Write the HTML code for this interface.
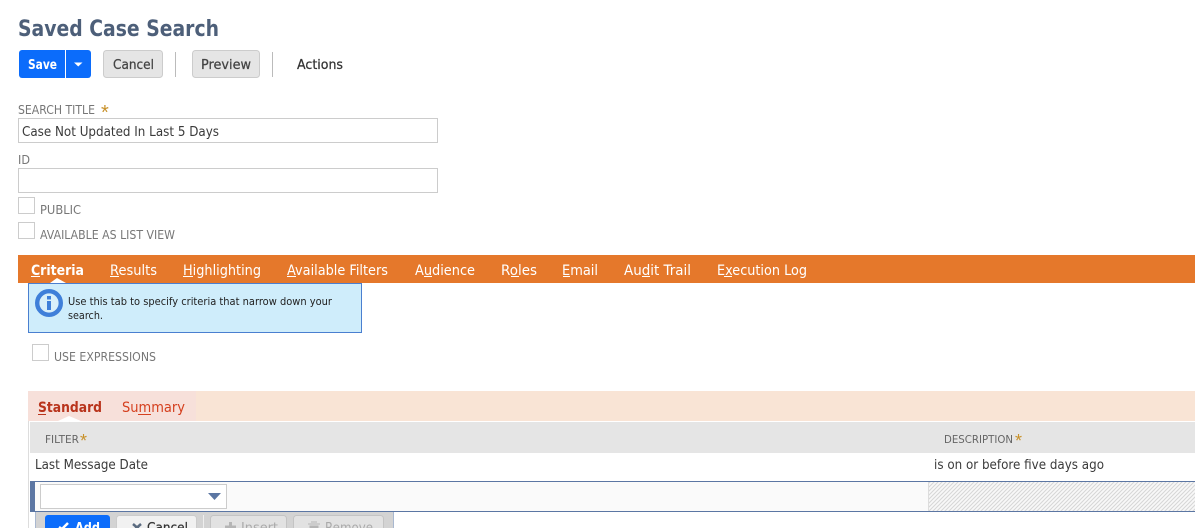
<!DOCTYPE html>
<html><head><meta charset="utf-8"><style>
html,body{margin:0;padding:0;background:#fff;width:1195px;height:528px;overflow:hidden}
svg{display:block}
text{font-family:"DejaVu Sans",sans-serif;font-size:13px;fill:#3a3a3a}
.l{font-size:12px;fill:#777}
.t{font-size:14.5px;fill:#fff}
.s{font-family:"Liberation Sans",sans-serif;fill:#c8912a}
</style></head><body>
<svg width="1195" height="528" viewBox="0 0 1195 528" xmlns="http://www.w3.org/2000/svg">
<defs><pattern id="h" width="4" height="4" patternUnits="userSpaceOnUse"><rect width="4" height="4" fill="#f8f8f8"/><path d="M-1 1L1 -1M0 4L4 0M3 5L5 3" stroke="#d6d6d6" stroke-width="1"/></pattern></defs>

<text x="18" y="36" textLength="201" lengthAdjust="spacingAndGlyphs" style="font-size:22px;font-weight:700;fill:#4d5f79">Saved Case Search</text>

<rect x="19" y="50" width="72" height="28" rx="3" fill="#0b6cfb"/>
<rect x="65" y="50" width="1" height="28" fill="#fff"/>
<path d="M74 62.500h8.500l-4.250 4z" fill="#fff"/>
<text x="28" y="69" textLength="29" lengthAdjust="spacingAndGlyphs" style="font-weight:700;fill:#fff">Save</text>
<rect x="103.500" y="50.500" width="59" height="27" rx="3" fill="#e5e5e5" stroke="#ccc"/>
<text x="113" y="69" textLength="41" lengthAdjust="spacingAndGlyphs" style="fill:#444;stroke:#444;stroke-width:.25">Cancel</text>
<rect x="175" y="52" width="1" height="25" fill="#bbb"/>
<rect x="192.500" y="50.500" width="67" height="27" rx="3" fill="#e5e5e5" stroke="#ccc"/>
<text x="201" y="69" textLength="50" lengthAdjust="spacingAndGlyphs" style="fill:#444;stroke:#444;stroke-width:.25">Preview</text>
<rect x="272" y="52" width="1" height="25" fill="#bbb"/>
<text x="297" y="69" textLength="46" lengthAdjust="spacingAndGlyphs" style="fill:#333;stroke:#333;stroke-width:.25">Actions</text>

<text class="l" x="18" y="114" textLength="77" lengthAdjust="spacingAndGlyphs">SEARCH TITLE</text>
<text class="s" x="101" y="119" style="font-size:20px">*</text>
<rect x="18.500" y="118.500" width="419" height="24" fill="#fff" stroke="#ccc"/>
<text x="22" y="136" textLength="197" lengthAdjust="spacingAndGlyphs">Case Not Updated In Last 5 Days</text>
<text class="l" x="18" y="164" textLength="12" lengthAdjust="spacingAndGlyphs">ID</text>
<rect x="18.500" y="168.500" width="419" height="24" fill="#fff" stroke="#ccc"/>
<rect x="18.500" y="197.500" width="16" height="16" fill="#fff" stroke="#ccc"/>
<text class="l" x="40" y="214" textLength="41" lengthAdjust="spacingAndGlyphs">PUBLIC</text>
<rect x="18.500" y="222.500" width="16" height="16" fill="#fff" stroke="#ccc"/>
<text class="l" x="40" y="239" textLength="135" lengthAdjust="spacingAndGlyphs">AVAILABLE AS LIST VIEW</text>

<rect x="18" y="255" width="1177" height="28" fill="#e5782b"/>
<text class="t" x="31" y="275" textLength="53" lengthAdjust="spacingAndGlyphs" style="font-weight:700">Criteria</text>
<text class="t" x="110" y="275" textLength="47" lengthAdjust="spacingAndGlyphs">Results</text>
<text class="t" x="183" y="275" textLength="78" lengthAdjust="spacingAndGlyphs">Highlighting</text>
<text class="t" x="287" y="275" textLength="101" lengthAdjust="spacingAndGlyphs">Available Filters</text>
<text class="t" x="415" y="275" textLength="60" lengthAdjust="spacingAndGlyphs">Audience</text>
<text class="t" x="501" y="275" textLength="36" lengthAdjust="spacingAndGlyphs">Roles</text>
<text class="t" x="562" y="275" textLength="36" lengthAdjust="spacingAndGlyphs">Email</text>
<text class="t" x="624" y="275" textLength="67" lengthAdjust="spacingAndGlyphs">Audit Trail</text>
<text class="t" x="717" y="275" textLength="90" lengthAdjust="spacingAndGlyphs">Execution Log</text>
<g fill="#fff">
<rect x="31" y="276" width="9" height="1"/><rect x="110" y="276" width="9" height="1"/><rect x="183" y="276" width="10" height="1"/><rect x="287" y="276" width="9" height="1"/><rect x="424" y="276" width="8" height="1"/><rect x="511" y="276" width="8" height="1"/><rect x="563" y="276" width="7" height="1"/><rect x="642" y="276" width="8" height="1"/><rect x="724" y="276" width="8" height="1"/>
<path d="M50 283l7-5 9 5z"/>
</g>

<rect x="28.500" y="283.500" width="333" height="49" fill="#cfedfb" stroke="#4a7fd0"/>
<circle cx="49" cy="303" r="11.800" fill="#d9effa" stroke="#3f7fd9" stroke-width="4.400"/>
<rect x="47" y="296" width="4" height="3.500" fill="#3f7fd9"/>
<rect x="47" y="301" width="4" height="9" fill="#3f7fd9"/>
<text x="68" y="305" textLength="264" lengthAdjust="spacingAndGlyphs" style="font-size:11px;fill:#222">Use this tab to specify criteria that narrow down your</text>
<text x="68" y="319" textLength="35" lengthAdjust="spacingAndGlyphs" style="font-size:11px;fill:#222">search.</text>

<rect x="32.500" y="344.500" width="16" height="16" fill="#fff" stroke="#ccc"/>
<text class="l" x="54" y="361" textLength="102" lengthAdjust="spacingAndGlyphs">USE EXPRESSIONS</text>

<rect x="28" y="391" width="1167" height="30" fill="#f9e4d5"/>
<rect x="28" y="391" width="168" height="30" fill="#f7e0da"/>
<text x="38" y="412" textLength="64" lengthAdjust="spacingAndGlyphs" style="font-size:14.500px;font-weight:700;fill:#b9341c">Standard</text>
<text x="122" y="412" textLength="63" lengthAdjust="spacingAndGlyphs" style="font-size:14.500px;fill:#d5401f">Summary</text>
<rect x="38" y="414" width="8" height="1" fill="#b9341c"/>
<rect x="138" y="414" width="13" height="1" fill="#d5401f"/>
<path d="M58 421l11-5 12 5z" fill="#fff"/>

<rect x="28" y="421" width="1" height="107" fill="#ddd"/>
<rect x="30" y="422" width="1165" height="31" fill="#e5e5e5"/>
<text x="45" y="443" textLength="34" lengthAdjust="spacingAndGlyphs" style="font-size:11px;fill:#666">FILTER</text>
<text class="s" x="80" y="447" style="font-size:18px">*</text>
<text x="944" y="443" textLength="69" lengthAdjust="spacingAndGlyphs" style="font-size:11px;fill:#666">DESCRIPTION</text>
<text class="s" x="1015" y="447" style="font-size:18px">*</text>
<text x="35" y="469" textLength="113" lengthAdjust="spacingAndGlyphs">Last Message Date</text>
<text x="934" y="469" textLength="170" lengthAdjust="spacingAndGlyphs">is on or before five days ago</text>

<rect x="30" y="481" width="1165" height="31" fill="#fafafa"/>
<rect x="929" y="482" width="266" height="29" fill="url(#h)"/>
<rect x="928" y="482" width="1" height="29" fill="#ddd"/>
<rect x="30" y="481" width="1165" height="1" fill="#5b76a3"/>
<rect x="30" y="511" width="1165" height="1" fill="#5b76a3"/>
<rect x="30" y="481" width="5" height="31" fill="#5b76a3"/>
<rect x="40.500" y="484.500" width="186" height="24" fill="#fff" stroke="#ccc"/>
<path d="M208 493h13l-6.500 7z" fill="#5b76a3"/>

<rect x="35" y="512" width="358" height="16" fill="#d3d3d3"/>
<rect x="35" y="512" width="1" height="16" fill="#a9b8d0"/>
<rect x="393" y="512" width="1" height="16" fill="#a9b8d0"/>
<rect x="45" y="515" width="65" height="20" rx="3" fill="#0b6cfb"/>
<path d="M59 527l3 2 6-6" fill="none" stroke="#fff" stroke-width="2.500"/>
<text x="75" y="532" textLength="25" lengthAdjust="spacingAndGlyphs" style="font-weight:700;fill:#fff">Add</text>
<rect x="116.500" y="515.500" width="80" height="20" rx="3" fill="#f1f1f1" stroke="#ccc"/>
<path d="M133 524l8 7M141 524l-8 7" stroke="#5b6b80" stroke-width="2.500"/>
<text x="147" y="532" textLength="41" lengthAdjust="spacingAndGlyphs" style="fill:#333;stroke:#333;stroke-width:.25">Cancel</text>
<rect x="203" y="515" width="1" height="13" fill="#eee"/>
<rect x="210.500" y="515.500" width="76" height="20" rx="3" fill="#e2e2e2" stroke="#c4c4c4"/>
<path d="M225 527h11M230.500 522v10" stroke="#b5b5b5" stroke-width="3"/>
<text x="241" y="532" textLength="37" lengthAdjust="spacingAndGlyphs" style="fill:#aaa">Insert</text>
<rect x="293.500" y="515.500" width="90" height="20" rx="3" fill="#e2e2e2" stroke="#c4c4c4"/>
<path d="M308 524h12M311 522h6M310 526h8v4h-8z" fill="#b5b5b5" stroke="#b5b5b5"/>
<text x="325" y="532" textLength="48" lengthAdjust="spacingAndGlyphs" style="fill:#aaa">Remove</text>
</svg>
</body></html>
